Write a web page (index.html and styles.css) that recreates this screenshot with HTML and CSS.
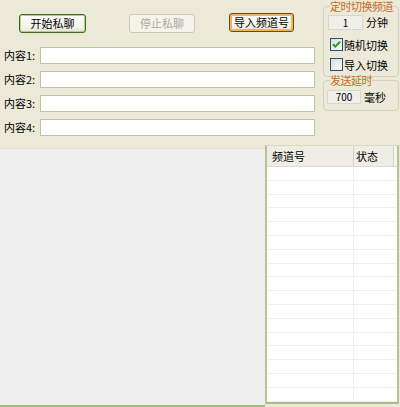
FILE: index.html
```html
<!DOCTYPE html>
<html>
<head>
<meta charset="utf-8">
<link rel="stylesheet" href="styles.css">
</head>
<body>
<div class="win">
  <div class="top">
    <div class="main">
      <div class="btnrow">
        <button class="btn btn-start">开始私聊</button>
        <button class="btn btn-stop" disabled>停止私聊</button>
        <button class="btn btn-import">导入频道号</button>
      </div>
      <div class="fields">
        <div class="field"><span class="lbl">内容1:</span><span class="txt"></span></div>
        <div class="field"><span class="lbl">内容2:</span><span class="txt"></span></div>
        <div class="field"><span class="lbl">内容3:</span><span class="txt"></span></div>
        <div class="field"><span class="lbl">内容4:</span><span class="txt"></span></div>
      </div>
    </div>
    <div class="side">
      <fieldset class="grp grp1">
        <legend>定时切换频道</legend>
        <div class="line"><span class="num num1">1</span><span class="unit">分钟</span></div>
        <div class="chk chk1"><span class="box"><svg width="11" height="11" viewBox="0 0 11 11"><path d="M2 5.2 L4.3 7.6 L9 2.8" fill="none" stroke="#21a121" stroke-width="2"/></svg></span><span>随机切换</span></div>
        <div class="chk chk2"><span class="box"></span><span>导入切换</span></div>
      </fieldset>
      <fieldset class="grp grp2">
        <legend>发送延时</legend>
        <div class="line line2"><span class="num num2">700</span><span class="unit">毫秒</span></div>
      </fieldset>
    </div>
  </div>
  <div class="bottom">
    <div class="log"></div>
    <div class="list">
      <div class="hdr"><div class="h1">频道号</div><div class="h2">状态</div><div class="h3"></div></div>
      <div class="row"><div class="c1"></div><div class="c2"></div></div>
      <div class="row"><div class="c1"></div><div class="c2"></div></div>
      <div class="row"><div class="c1"></div><div class="c2"></div></div>
      <div class="row"><div class="c1"></div><div class="c2"></div></div>
      <div class="row"><div class="c1"></div><div class="c2"></div></div>
      <div class="row"><div class="c1"></div><div class="c2"></div></div>
      <div class="row"><div class="c1"></div><div class="c2"></div></div>
      <div class="row"><div class="c1"></div><div class="c2"></div></div>
      <div class="row"><div class="c1"></div><div class="c2"></div></div>
      <div class="row"><div class="c1"></div><div class="c2"></div></div>
      <div class="row"><div class="c1"></div><div class="c2"></div></div>
      <div class="row"><div class="c1"></div><div class="c2"></div></div>
      <div class="row"><div class="c1"></div><div class="c2"></div></div>
      <div class="row"><div class="c1"></div><div class="c2"></div></div>
      <div class="row"><div class="c1"></div><div class="c2"></div></div>
      <div class="row"><div class="c1"></div><div class="c2"></div></div>
      <div class="row"><div class="c1"></div><div class="c2"></div></div>
    </div>
  </div>
</div>
</body>
</html>
```
FILE: styles.css
```css
* { box-sizing: border-box; }
html, body { margin: 0; padding: 0; }
body { background: #ece9d8; }
.win {
  width: 400px;
  height: 407px;
  background: #ece9d8;
  font-family: "Noto Sans CJK SC", "Liberation Sans", sans-serif;
  font-size: 11px;
  color: #000;
  overflow: hidden;
}
.top { display: flex; height: 145px; }
.main { width: 323px; }
.btnrow { display: flex; align-items: flex-start; padding-top: 13px; height: 33px; }
.btn {
  height: 19px;
  padding: 0;
  font-family: inherit;
  font-size: 11px;
  line-height: 17px;
  border-radius: 3px;
  border: 1px solid #3f6a1e;
  background: linear-gradient(#fefefb, #f3f2ea 70%, #e6e4d6);
  color: #000;
}
.btn-start { margin: 1px 0 0 19px; width: 67px; box-shadow: inset 0 0 0 1px #b5cf8e; }
.btn-stop {
  margin: 1px 0 0 43px;
  width: 66px;
  border-color: #cac8bb;
  background: #f5f4ea;
  color: #aca899;
}
.btn-import {
  margin: 0 0 0 34px;
  width: 65px;
  border-color: #5e4a24;
  box-shadow: inset 0 0 0 2px #f4b25a;
}
.fields { padding-top: 14px; }
.field { display: flex; align-items: center; height: 17px; margin-bottom: 7px; }
.lbl { width: 40px; padding-left: 4px; line-height: 17px; }
.txt { width: 275px; height: 17px; border: 1px solid #b9c99e; background: #fff; }

.side { width: 77px; padding-top: 1px; }
.grp {
  margin: 0;
  width: 76px;
  padding: 0 0 5px 4px;
  border: 1px solid #d2d0c2;
  border-radius: 4px;
  min-width: 0;
}
.grp legend {
  padding: 0;
  margin-left: 2px;
  color: #c8691c;
  font-size: 11px;
  line-height: 11px;
  white-space: nowrap;
  letter-spacing: -0.5px;
}
.grp2 { margin-top: -2px; }
.line { display: flex; align-items: center; margin-top: 2px; }
.line2 { margin-top: 3px; }
.num {
  display: block;
  background: #f0efe9;
  border: 1px solid #d8d7cf;
  text-align: center;
  font-size: 10px;
}
.num1 { width: 35px; height: 15px; line-height: 13px; }
.num2 { width: 34px; height: 14px; line-height: 12px; margin-left: -1px; }
.unit { margin-left: 3px; }
.chk { display: flex; align-items: center; height: 13px; margin-left: 2px; }
.chk1 { margin-top: 8px; }
.chk2 { margin-top: 7px; }
.box {
  width: 13px;
  height: 13px;
  border: 1px solid #1c5180;
  background: linear-gradient(135deg, #dcdbd3, #fbfbf9);
  margin-right: 1px;
  display: flex;
}
.box svg { display: block; }

.bottom { display: flex; height: 262px; }
.log {
  width: 265px;
  margin-top: 3px;
  height: 259px;
  background: #efefef;
  border-top: 1px solid #dfe4d0;
  border-bottom: 2px solid #a4bb7c;
}
.list {
  width: 134px;
  height: 259px;
  background: #fff;
  border-top: 1px solid #d5dcc0;
  border-left: 2px solid #b5c494;
  border-right: 2px solid #b5c494;
  border-bottom: 2px solid #a9bc85;
}
.hdr {
  display: flex;
  height: 21px;
  background: #efeee5;
  border-bottom: 1px solid #dedcd0;
  line-height: 20px;
}
.h1 { width: 87px; padding-left: 5px; border-right: 1px solid #d3d1c3; }
.h2 { width: 40px; padding-left: 2px; border-right: 1px solid #d3d1c3; }
.h3 { flex: 1; background: #f6f5ef; }
.row { display: flex; height: 13.8px; border-bottom: 1px solid #efefef; }
.c1 { width: 87px; border-right: 1px solid #f1f1f1; }
.c2 { flex: 1; }
```
